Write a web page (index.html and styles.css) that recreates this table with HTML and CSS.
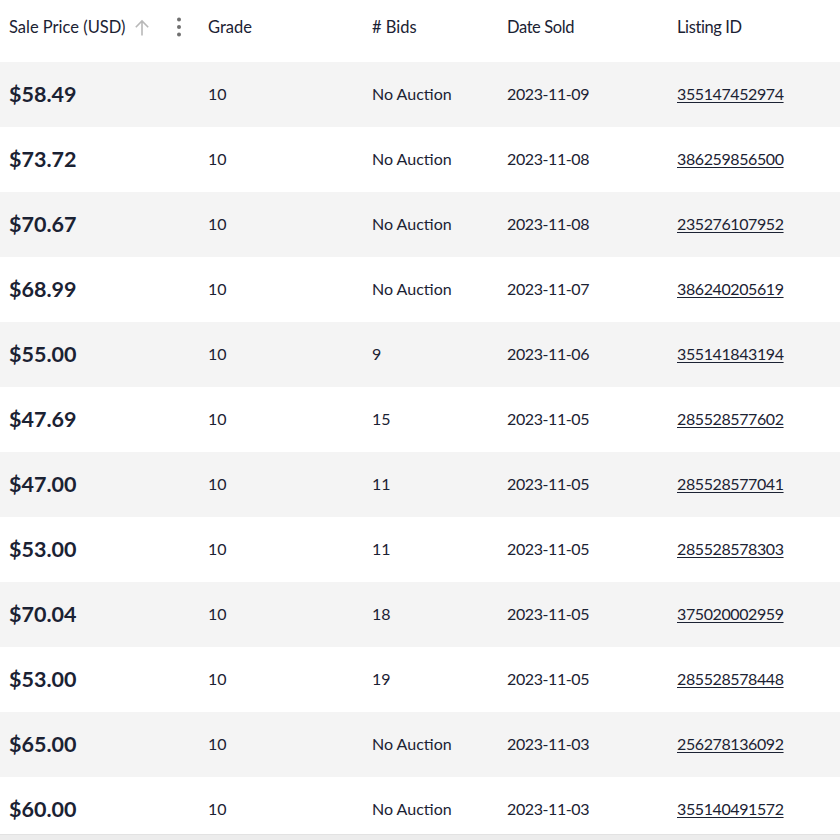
FILE: index.html
```html
<!DOCTYPE html>
<html>
<head>
<meta charset="utf-8">
<link rel="stylesheet" href="styles.css">
</head>
<body>
<div class="wrap">
 <div class="rows">
  <div class="row head">
    <div class="cell c1"><span>Sale Price (USD)</span>
      <svg class="arrow" width="16" height="17" viewBox="0 0 16 17"><path d="M8 16.5V2M1.8 8.2L8 2l6.2 6.2" fill="none" stroke="#b8b8b8" stroke-width="1.6"/></svg>
      <svg class="kebab" width="6" height="20" viewBox="0 0 6 20"><circle cx="3" cy="2.5" r="2" fill="#707070"/><circle cx="3" cy="10" r="2" fill="#707070"/><circle cx="3" cy="17.5" r="2" fill="#707070"/></svg>
    </div>
    <div class="cell c2">Grade</div>
    <div class="cell c3"># Bids</div>
    <div class="cell c4">Date Sold</div>
    <div class="cell c5">Listing ID</div>
  </div>
  <div class="row alt"><div class="cell c1 price">$58.49</div><div class="cell c2">10</div><div class="cell c3">No Auction</div><div class="cell c4">2023-11-09</div><div class="cell c5"><a href="#">355147452974</a></div></div>
  <div class="row"><div class="cell c1 price">$73.72</div><div class="cell c2">10</div><div class="cell c3">No Auction</div><div class="cell c4">2023-11-08</div><div class="cell c5"><a href="#">386259856500</a></div></div>
  <div class="row alt"><div class="cell c1 price">$70.67</div><div class="cell c2">10</div><div class="cell c3">No Auction</div><div class="cell c4">2023-11-08</div><div class="cell c5"><a href="#">235276107952</a></div></div>
  <div class="row"><div class="cell c1 price">$68.99</div><div class="cell c2">10</div><div class="cell c3">No Auction</div><div class="cell c4">2023-11-07</div><div class="cell c5"><a href="#">386240205619</a></div></div>
  <div class="row alt"><div class="cell c1 price">$55.00</div><div class="cell c2">10</div><div class="cell c3">9</div><div class="cell c4">2023-11-06</div><div class="cell c5"><a href="#">355141843194</a></div></div>
  <div class="row"><div class="cell c1 price">$47.69</div><div class="cell c2">10</div><div class="cell c3">15</div><div class="cell c4">2023-11-05</div><div class="cell c5"><a href="#">285528577602</a></div></div>
  <div class="row alt"><div class="cell c1 price">$47.00</div><div class="cell c2">10</div><div class="cell c3">11</div><div class="cell c4">2023-11-05</div><div class="cell c5"><a href="#">285528577041</a></div></div>
  <div class="row"><div class="cell c1 price">$53.00</div><div class="cell c2">10</div><div class="cell c3">11</div><div class="cell c4">2023-11-05</div><div class="cell c5"><a href="#">285528578303</a></div></div>
  <div class="row alt"><div class="cell c1 price">$70.04</div><div class="cell c2">10</div><div class="cell c3">18</div><div class="cell c4">2023-11-05</div><div class="cell c5"><a href="#">375020002959</a></div></div>
  <div class="row"><div class="cell c1 price">$53.00</div><div class="cell c2">10</div><div class="cell c3">19</div><div class="cell c4">2023-11-05</div><div class="cell c5"><a href="#">285528578448</a></div></div>
  <div class="row alt"><div class="cell c1 price">$65.00</div><div class="cell c2">10</div><div class="cell c3">No Auction</div><div class="cell c4">2023-11-03</div><div class="cell c5"><a href="#">256278136092</a></div></div>
  <div class="row"><div class="cell c1 price">$60.00</div><div class="cell c2">10</div><div class="cell c3">No Auction</div><div class="cell c4">2023-11-03</div><div class="cell c5"><a href="#">355140491572</a></div></div>
 </div>
 <div class="scrollbar"></div>
</div>
</body>
</html>
```
FILE: styles.css
```css
html, body { margin: 0; padding: 0; background: #fff; }
body { font-family: "Lato", "Noto Sans", sans-serif; color: #1b2233; font-size: 16px; overflow: hidden; }
.wrap { width: 840px; height: 840px; display: flex; flex-direction: column; overflow: hidden; }
.rows { height: 834px; overflow: hidden; flex: none; border-bottom: 1px solid #e2e2e2; }
.row { display: grid; grid-template-columns: 199px 164px 135px 170px 172px; height: 65px; align-items: center; padding-bottom: 2px; box-sizing: border-box; }
.row.head { height: 62px; padding-bottom: 8px; }
.row.alt { background: #f4f4f4; }
.cell { padding-left: 9px; white-space: nowrap; }
.head .cell { font-size: 16.5px; }
.c1 { display: flex; align-items: center; }
.arrow { margin-left: 9px; }
.kebab { margin-left: 26px; }
.price { font-size: 21.5px; font-weight: 700; }
.c4, .c5 { letter-spacing: -0.4px; }
a { color: #1b2233; text-decoration: underline; text-underline-offset: 2px; }
.scrollbar { height: 5px; background: #ececec; flex: none; }
```
